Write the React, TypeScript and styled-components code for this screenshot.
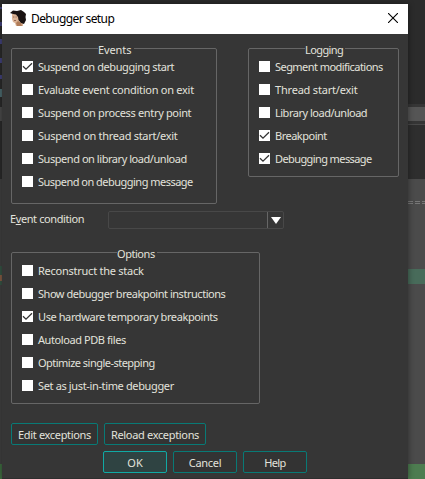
import React, { useState } from "react";
import styled, { createGlobalStyle } from "styled-components";

const Global = createGlobalStyle`
  * { box-sizing: border-box; }
  body { margin: 0; background: #2b2b2b; overflow: hidden; }
`;

const Desktop = styled.div`
  position: relative;
  width: 425px;
  height: 479px;
  overflow: hidden;
  display: flex;
  justify-content: space-between;
  font-family: "Noto Sans", "Open Sans", sans-serif;
`;

const Strip = styled.div<{ $w: number }>`
  width: ${(p) => p.$w}px;
  display: flex;
  flex-direction: column;
`;

const Band = styled.div<{ $h: number; $c: string }>`
  flex: none;
  height: ${(p) => p.$h}px;
  background: ${(p) => p.$c};
`;

const Dashes = styled.div`
  flex: none;
  height: 1px;
  background: repeating-linear-gradient(90deg, #777 0 5px, #4b4b4b 5px 7px);
`;

const Dialog = styled.section`
  position: absolute;
  left: 2px;
  top: 4px;
  width: 406px;
  height: 475px;
  background: #363636;
  box-shadow: 0 0 6px rgba(0, 0, 0, 0.45);
  color: #e2e2dc;
  font-size: 11px;
  border-bottom: 1px solid #2e2e2e;
`;

const TitleBar = styled.header`
  display: flex;
  align-items: center;
  height: 30px;
  padding: 0 10px 2px 7px;
  background: #fff;
  color: #000;
`;

const Title = styled.h1`
  flex: 1;
  margin: 1px 0 0 4px;
  font-size: 12px;
  font-weight: 400;
  line-height: 16px;
  letter-spacing: -0.6px;
`;

const Close = styled.button`
  display: flex;
  padding: 0;
  border: 0;
  background: none;
`;

const Body = styled.div`
  padding: 14px 9px 0;
`;

const Groups = styled.div`
  display: flex;
  justify-content: space-between;
  align-items: flex-start;
`;

const Group = styled.fieldset<{ $w: number; $h: number }>`
  display: flex;
  flex-direction: column;
  gap: 6px;
  width: ${(p) => p.$w}px;
  height: ${(p) => p.$h}px;
  margin: 0;
  padding: 9px 0 0 10px;
  border: 1px solid #666;
  border-radius: 2px;
  min-width: 0;
  position: relative;
`;

/* The caption sits on top of the frame line. */
const Caption = styled.span<{ $x: number; $w: number; $ls: number }>`
  position: absolute;
  left: ${(p) => p.$x}px;
  top: -7px;
  width: ${(p) => p.$w}px;
  line-height: 15px;
  letter-spacing: ${(p) => p.$ls}px;
  white-space: nowrap;
  background: #363636;
`;

const CheckRow = styled.label`
  display: flex;
  align-items: center;
  gap: 5px;
  height: 17px;
  white-space: nowrap;
`;

const Box = styled.span`
  display: flex;
  width: 11px;
  height: 11px;
  background: #fff;
`;

const Text = styled.span<{ $ls: number }>`
  line-height: 17px;
  letter-spacing: ${(p) => p.$ls}px;
`;

const Condition = styled.div`
  display: flex;
  align-items: center;
  height: 19px;
  margin: 6px 0 23px;
`;

const ConditionLabel = styled.label`
  width: 97px;
  margin-left: -1px;
  padding-bottom: 1px;
  line-height: 16px;
  letter-spacing: -0.4px;
`;

const Combo = styled.div`
  display: flex;
  justify-content: flex-end;
  width: 176px;
  height: 18px;
  margin-left: 1px;
  border: 1px solid #484848;
  border-radius: 2px;
`;

const ComboArrow = styled.span`
  display: flex;
  align-items: center;
  justify-content: center;
  width: 16px;
  padding-top: 2px;
  border-left: 1px solid #666;
`;

const Buttons = styled.div<{ $top: number; $left: number }>`
  display: flex;
  gap: 6px;
  margin: ${(p) => p.$top}px 0 0 ${(p) => p.$left}px;
`;

const Button = styled.button<{ $w: number; $ls?: number; $primary?: boolean }>`
  width: ${(p) => p.$w}px;
  height: 22px;
  padding: 2px 0 0;
  border: 1px solid ${(p) => (p.$primary ? "#10aaa5" : "#087a76")};
  border-radius: 2px;
  background: ${(p) => (p.$primary ? "#2f4342" : "#333")};
  color: inherit;
  font: inherit;
  line-height: 18px;
  letter-spacing: ${(p) => p.$ls ?? 0}px;
  white-space: nowrap;
`;

function Portrait() {
  return (
    <svg width="18" height="18" viewBox="0 0 18 18">
      <path d="M3 5L8 4L10 9L10 12L14 14L14 17L7 17L6 14L4 13L3 10Z" fill="#dcb496" />
      <path d="M7 14L9 12L12 14L13 17L8 17Z" fill="#b07c58" />
      <path d="M1 4L4 1.5L8 2L12 1L15 3L17 5L16.5 8L17 11L15 15L12 14L9.5 11L9 8L7 5.5L4 5Z" fill="#1a1211" />
      <path d="M4 8h1.4M6.5 8h1.2M5 11.5h2" stroke="#7a4b3c" strokeWidth="0.7" fill="none" />
    </svg>
  );
}

type Item = { text: string; on?: boolean; ls: number };

function Check({ item }: { item: Item }) {
  const [on, setOn] = useState(!!item.on);
  return (
    <CheckRow onClick={() => setOn(!on)}>
      <Box>
        {on && (
          <svg width="11" height="11" viewBox="0 0 11 11">
            <path d="M1 5.2L4 8.2L10 2.2" fill="none" stroke="#333" strokeWidth="1.3" />
          </svg>
        )}
      </Box>
      <Text $ls={item.ls}>{item.text}</Text>
    </CheckRow>
  );
}

const events: Item[] = [
  { text: "Suspend on debugging start", on: true, ls: -0.42 },
  { text: "Evaluate event condition on exit", ls: -0.27 },
  { text: "Suspend on process entry point", ls: -0.34 },
  { text: "Suspend on thread start/exit", ls: -0.29 },
  { text: "Suspend on library load/unload", ls: -0.45 },
  { text: "Suspend on debugging message", ls: -0.52 },
];
const logging: Item[] = [
  { text: "Segment modifications", ls: -0.55 },
  { text: "Thread start/exit", ls: -0.2 },
  { text: "Library load/unload", ls: -0.49 },
  { text: "Breakpoint", on: true, ls: -0.5 },
  { text: "Debugging message", on: true, ls: -0.6 },
];
const options: Item[] = [
  { text: "Reconstruct the stack", ls: -0.25 },
  { text: "Show debugger breakpoint instructions", ls: -0.47 },
  { text: "Use hardware temporary breakpoints", on: true, ls: -0.41 },
  { text: "Autoload PDB files", ls: -0.42 },
  { text: "Optimize single-stepping", ls: -0.52 },
  { text: "Set as just-in-time debugger", ls: -0.36 },
];

export default function App() {
  return (
    <Desktop>
      <Global />
      <Strip $w={2}>
        <Band $h={7} $c="#2b2b2b" />
        <Band $h={2} $c="#42427c" />
        <Band $h={13} $c="#2b2b2b" />
        <Band $h={4} $c="#42427c" />
        <Band $h={13} $c="#2b2b2b" />
        <Band $h={5} $c="#42427c" />
        <Band $h={14} $c="#2b2b2b" />
        <Band $h={5} $c="#42427c" />
        <Band $h={12} $c="#2b2b2b" />
        <Band $h={4} $c="#42427c" />
        <Band $h={10} $c="#2b2b2b" />
        <Band $h={8} $c="#4c6b70" />
        <Band $h={10} $c="#2b2b2b" />
        <Band $h={14} $c="#4b4b4b" />
        <Band $h={58} $c="#2b2b2b" />
        <Band $h={87} $c="#414141" />
        <Band $h={9} $c="#365545" />
        <Band $h={6} $c="#865d44" />
        <Band $h={4} $c="#365545" />
        <Band $h={179} $c="#414141" />
        <Band $h={15} $c="#3f6d41" />
      </Strip>
      <Strip $w={17}>
        <Band $h={104} $c="#2b2b2b" />
        <Band $h={3} $c="#363636" />
        <Band $h={14} $c="#555" />
        <Band $h={3} $c="#353535" />
        <Band $h={1} $c="#494949" />
        <Band $h={54} $c="#2e2e2e" />
        <Band $h={22} $c="#4b4b4b" />
        <Dashes />
        <Band $h={1} $c="#4b4b4b" />
        <Dashes />
        <Band $h={65} $c="#4b4b4b" />
        <Band $h={15} $c="#486b5a" />
        <Band $h={180} $c="#4b4b4b" />
        <Band $h={15} $c="#4d7c50" />
      </Strip>
      <Dialog>
        <TitleBar>
          <Portrait />
          <Title>Debugger setup</Title>
          <Close aria-label="Close">
            <svg width="10" height="10" viewBox="0 0 10 10">
              <path d="M0 0L10 10M10 0L0 10" stroke="#000" strokeWidth="1.1" />
            </svg>
          </Close>
        </TitleBar>
        <Body>
          <Groups>
            <Group $w={206} $h={156}>
              <Caption $x={86} $w={36} $ls={-0.1}>Events</Caption>
              {events.map((i) => <Check key={i.text} item={i} />)}
            </Group>
            <Group $w={151} $h={129}>
              <Caption $x={56} $w={40} $ls={-0.6}>Logging</Caption>
              {logging.map((i) => <Check key={i.text} item={i} />)}
            </Group>
          </Groups>
          <Condition>
            <ConditionLabel>E<u>v</u>ent condition</ConditionLabel>
            <Combo>
              <ComboArrow>
                <svg width="10" height="7" viewBox="0 0 10 7"><path d="M0 0H10L5 7Z" fill="#fff" /></svg>
              </ComboArrow>
            </Combo>
          </Condition>
          <Group $w={249} $h={152}>
            <Caption $x={105} $w={40} $ls={-0.45}>Options</Caption>
            {options.map((i) => <Check key={i.text} item={i} />)}
          </Group>
          <Buttons $top={19} $left={0}>
            <Button $w={87} $ls={-0.33}>Edit exceptions</Button>
            <Button $w={102} $ls={-0.33}>Reload exceptions</Button>
          </Buttons>
          <Buttons $top={6} $left={92}>
            <Button $w={64} $primary>OK</Button>
            <Button $w={64} $ls={-0.3}>Cancel</Button>
            <Button $w={64} $ls={-0.6}>Help</Button>
          </Buttons>
        </Body>
      </Dialog>
    </Desktop>
  );
}
